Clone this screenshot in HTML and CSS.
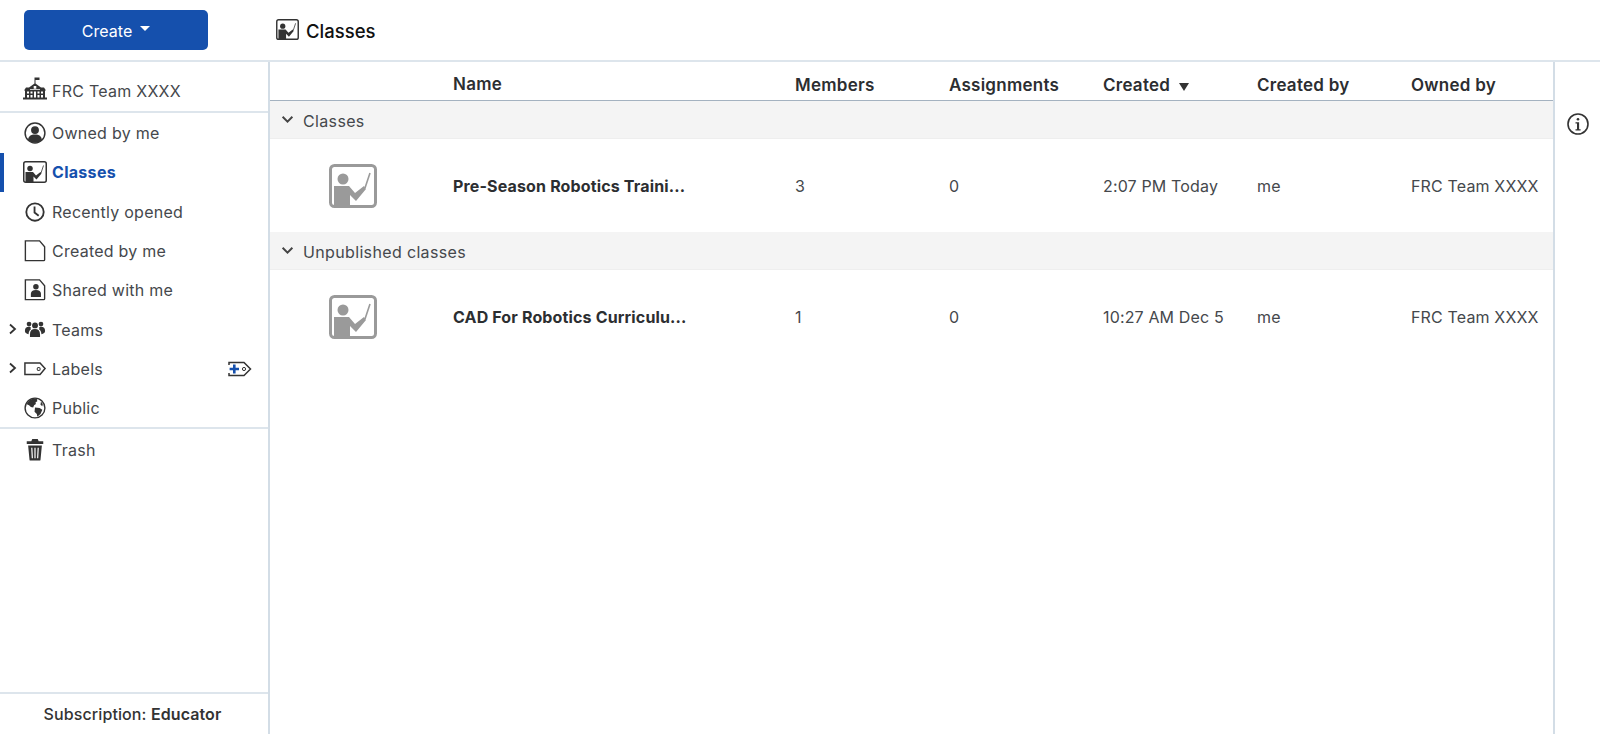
FILE: index.html
```html
<!DOCTYPE html>
<html lang="en">
<head>
<meta charset="utf-8">
<title>Classes</title>
<link rel="stylesheet" href="styles.css">
</head>
<body>
<svg width="0" height="0" class="defs">
  <defs>
    <symbol id="i-class" viewBox="0 0 48 44">
      <rect x="1.500" y="1.500" width="45" height="41" rx="4" fill="none" stroke="currentColor" stroke-width="3"/>
      <circle cx="14" cy="15" r="5.500" fill="currentColor"/>
      <path fill="currentColor" d="M5 22h15l6 7 9-7 2 3-10 12-6-6v11H5z"/>
      <path fill="none" stroke="currentColor" stroke-width="1.600" d="M36 24l5-15"/>
    </symbol>
  </defs>
</svg>
<header class="topbar">
  <div class="topbar-left">
    <button class="create">Create<span class="caret"></span></button>
  </div>
  <div class="crumb">
    <svg class="ico crumb-ico"><use href="#i-class"/></svg>
    <span>Classes</span>
  </div>
</header>
<div class="main">
  <nav class="sidebar">
    <div class="nav-top">
      <div class="nav-item team">
        <svg class="ico school" viewBox="0 0 24 24"><path fill="currentColor" d="M11.500 0h5v2.600h-4V6l5.500 4H21l2 3h-1v7h2v2H0v-2h2v-7H1l2-3h3l5.500-4z"/><path fill="#fff" d="M10.700 8.600h2.600v2.600h-2.600zM4 14h2v2H4zM4 17.500h2V20H4zM7.500 14h2v2h-2zM7.500 17.500h2V20h-2zM14.500 14h2v2h-2zM14.500 17.500h2V20h-2zM18 14h2v2h-2zM18 17.500h2V20h-2zM11 14h2v6h-2zM7 11.700h10v.8H7z"/></svg>
        <span>FRC Team XXXX</span>
      </div>
    </div>
    <div class="nav-list">
      <div class="nav-item">
        <svg class="ico" viewBox="0 0 24 24"><circle cx="12" cy="12" r="10.800" fill="none" stroke="currentColor" stroke-width="1.600"/><circle cx="12" cy="8.800" r="4.300" fill="currentColor"/><path fill="currentColor" d="M4.400 19.500c.3-4 3-6 7.600-6s7.300 2 7.600 6a11 11 0 0 1-15.200 0z"/></svg>
        <span>Owned by me</span>
      </div>
      <div class="nav-item active">
        <svg class="ico"><use href="#i-class"/></svg>
        <span>Classes</span>
      </div>
      <div class="nav-item">
        <svg class="ico" viewBox="0 0 24 24"><circle cx="12" cy="12" r="9.500" fill="none" stroke="currentColor" stroke-width="2"/><path fill="none" stroke="currentColor" stroke-width="2" d="M11.500 6V12.500l4.500 3.500"/></svg>
        <span>Recently opened</span>
      </div>
      <div class="nav-item">
        <svg class="ico" viewBox="0 0 24 24"><path fill="none" stroke="currentColor" stroke-width="1.500" d="M1.500 1h15.500l5.500 6.500v14a1 1 0 0 1-1 1h-20z"/></svg>
        <span>Created by me</span>
      </div>
      <div class="nav-item">
        <svg class="ico" viewBox="0 0 24 24"><path fill="none" stroke="currentColor" stroke-width="1.500" d="M1.500 1h15.500l5.500 6.500v14a1 1 0 0 1-1 1h-20z"/><circle cx="13" cy="8.500" r="3" fill="currentColor"/><path fill="currentColor" d="M7.500 19.500v-3.500c0-2.500 2-4 5.500-4s5.500 1.500 5.500 4v3.500z"/></svg>
        <span>Shared with me</span>
      </div>
      <div class="nav-item has-arrow">
        <svg class="arrow" viewBox="0 0 10 12"><path fill="none" stroke="currentColor" stroke-width="1.800" d="M2 1.500L7 6l-5 4.500"/></svg>
        <svg class="ico" viewBox="0 0 24 24"><circle cx="12" cy="7" r="3.200" fill="currentColor"/><circle cx="5.500" cy="5.500" r="2.600" fill="currentColor"/><circle cx="18.500" cy="5.500" r="2.600" fill="currentColor"/><path fill="currentColor" d="M6.500 17c0-4 2-6 5.500-6s5.500 2 5.500 6v2.500h-11zM1 13c0-3 1.500-4.500 4.500-4.500.8 0 1.500.2 2 .5-.5 1-.4 1.500.2 2.200-1.700 1-2.600 2.800-2.700 5.300C2.500 16 1 15 1 13zM23 13c0-3-1.500-4.500-4.500-4.500-.8 0-1.500.2-2 .5.500 1 .4 1.500-.2 2.200 1.700 1 2.600 2.800 2.700 5.300 2.500-.5 4-1.500 4-3.500z"/></svg>
        <span>Teams</span>
      </div>
      <div class="nav-item has-arrow">
        <svg class="arrow" viewBox="0 0 10 12"><path fill="none" stroke="currentColor" stroke-width="1.800" d="M2 1.500L7 6l-5 4.500"/></svg>
        <svg class="ico" viewBox="0 0 24 24"><path fill="none" stroke="currentColor" stroke-width="1.600" d="M1 5.500h16.500l5.500 6-5.500 6.500H1z"/><circle cx="16" cy="12" r="1.700" fill="none" stroke="currentColor" stroke-width="1.100"/></svg>
        <span>Labels</span>
        <svg class="add-label" viewBox="0 0 24 16"><path fill="none" stroke="#333" stroke-width="1.500" d="M1 4V1.500h15L22.500 8 16 14.500H1V12"/><circle cx="16" cy="8" r="1.600" fill="none" stroke="#333"/><path fill="#fff" d="M0 5h13v6H0z"/><path fill="#1550ad" d="M5 3.500h2.600v3.200h3.400v2.600H7.600v3.200H5V9.300H1.600V6.700H5z"/></svg>
      </div>
      <div class="nav-item">
        <svg class="ico" viewBox="0 0 24 24"><circle cx="12" cy="12" r="10.800" fill="none" stroke="currentColor" stroke-width="1.500"/><path fill="currentColor" d="M7 3c2-1.300 5-1.700 7-1l.5 2.500-2 1.500.5 1.500-2 1.500-1 2.500-2.500-.5L5.500 9 3 8C3.500 6 5 4.300 7 3zM12 11.500l5 .5 3 2-2 4.500-3.500 3-.5-3-2.500-2.500zM18.500 5l2 2.500-.5 2.500-2-1.500z"/></svg>
        <span>Public</span>
      </div>
    </div>
    <div class="nav-trash">
      <div class="nav-item">
        <svg class="ico" viewBox="0 0 24 24"><path fill="currentColor" d="M9 0h6l1 2.500h5v3H3v-3h5zM4.500 7h15l-1.500 15.500a1 1 0 0 1-1 1H7a1 1 0 0 1-1-1z"/><path stroke="#fff" stroke-width="1.300" d="M8.500 9.500l.6 11.500M12 9.500v11.500M15.500 9.500l-.6 11.500"/></svg>
        <span>Trash</span>
      </div>
    </div>
    <div class="subscription"><span>Subscription:&nbsp;<strong>Educator</strong></span></div>
  </nav>
  <section class="content">
    <div class="table-row head">
      <div></div>
      <div class="name-head">Name</div>
      <div>Members</div>
      <div>Assignments</div>
      <div class="sorted">Created<span class="sort"></span></div>
      <div>Created by</div>
      <div>Owned by</div>
    </div>
    <div class="group">
      <svg class="chev" viewBox="0 0 12 8"><path fill="none" stroke="currentColor" stroke-width="1.800" d="M1.500 1.500L6 6l4.500-4.500"/></svg>
      <span>Classes</span>
    </div>
    <div class="table-row item">
      <div class="thumb"><svg class="class-thumb"><use href="#i-class"/></svg></div>
      <div class="name">Pre-Season Robotics Traini...</div>
      <div>3</div>
      <div>0</div>
      <div>2:07 PM Today</div>
      <div>me</div>
      <div>FRC Team XXXX</div>
    </div>
    <div class="group">
      <svg class="chev" viewBox="0 0 12 8"><path fill="none" stroke="currentColor" stroke-width="1.800" d="M1.500 1.500L6 6l4.500-4.500"/></svg>
      <span>Unpublished classes</span>
    </div>
    <div class="table-row item">
      <div class="thumb"><svg class="class-thumb"><use href="#i-class"/></svg></div>
      <div class="name">CAD For Robotics Curriculu...</div>
      <div>1</div>
      <div>0</div>
      <div>10:27 AM Dec 5</div>
      <div>me</div>
      <div>FRC Team XXXX</div>
    </div>
  </section>
  <aside class="info">
    <svg class="info-ico" viewBox="0 0 24 24"><circle cx="12" cy="12" r="10" fill="none" stroke="currentColor" stroke-width="1.600"/><circle cx="12" cy="7.300" r="1.300" fill="currentColor"/><path fill="currentColor" d="M9.500 10.200h3.600v7h1.500v1.400H9.500v-1.400H11v-5.600H9.500z"/></svg>
  </aside>
</div>
</body>
</html>
```
FILE: styles.css
```css
* { box-sizing: border-box; }
html, body { margin: 0; height: 100%; overflow: hidden; }
body {
  font-family: "Inter", "Noto Sans", sans-serif;
  font-size: 16px;
  color: #45484c;
  background: #fff;
  display: flex;
  flex-direction: column;
}
.defs { position: absolute; }
.topbar {
  height: 62px;
  flex: none;
  display: flex;
  align-items: center;
  border-bottom: 2px solid #dde5ec;
}
.topbar-left { width: 276px; padding-left: 24px; }
.create {
  width: 184px;
  height: 40px;
  border: 0;
  border-radius: 5px;
  background: #1550ad;
  color: #fff;
  font: inherit;
  font-size: 16px;
  display: flex;
  align-items: center;
  justify-content: center;
  gap: 8px;
  padding-top: 2px;
  letter-spacing: .05px;
}
.caret {
  border-left: 5px solid transparent;
  border-right: 5px solid transparent;
  border-top: 5px solid #fff;
  margin-top: -4px;
}
.crumb {
  display: flex;
  align-items: center;
  gap: 7px;
  font-size: 18.500px;
  font-weight: 500;
  color: #111;
}
.crumb span { padding-top: 1px; }
.ico { width: 24px; height: 22px; flex: none; color: #333; }
.crumb-ico { width: 23px; height: 21px; margin-top: -2px; }
.main { flex: 1; display: flex; min-height: 0; }
.sidebar {
  width: 270px;
  flex: none;
  border-right: 2px solid #d3dde6;
  display: flex;
  flex-direction: column;
}
.nav-top { height: 51px; padding-top: 9px; border-bottom: 2px solid #dde5ec; }
.nav-list { padding-top: .4px; height: 316px; border-bottom: 2px solid #dde5ec; }
.nav-trash { padding-top: 1px; flex: 1; }
.nav-item {
  height: 39.300px;
  display: flex;
  align-items: center;
  gap: 5px;
  padding-left: 23px;
  position: relative;
  letter-spacing: .25px;
}
.school { width: 24px; height: 25px; margin-top: -3px; }
.nav-item.active { color: #1550ad; font-weight: 700; letter-spacing: .3px; }
.nav-item.active::before {
  content: "";
  position: absolute;
  left: 0;
  top: 0;
  width: 4px;
  height: 39px;
  background: #1550ad;
}
.arrow { position: absolute; left: 8px; top: 13px; width: 10px; height: 12px; color: #333; }
.add-label { width: 24px; height: 16px; margin-left: auto; margin-right: 16px; }
.subscription {
  height: 42px;
  border-top: 2px solid #dde5ec;
  display: flex;
  align-items: center;
  justify-content: center;
  font-weight: 500;
  color: #333;
  letter-spacing: .1px;
  padding-right: 3px;
}
.subscription strong { font-weight: 600; }
.content { flex: 1; min-width: 0; }
.table-row {
  display: grid;
  grid-template-columns: 183px 342px 154px 154px 154px 154px 1fr;
  align-items: center;
}
.head {
  height: 39px;
  border-bottom: 1px solid #a4b2c0;
  font-weight: 600;
  color: #2c2e31;
  font-size: 17px;
  letter-spacing: .25px;
  padding-top: 7px;
}
.name-head { margin-top: -2px; }
.sorted { display: flex; align-items: center; gap: 9px; }
.sort {
  border-left: 5px solid transparent;
  border-right: 5px solid transparent;
  border-top: 8px solid #333;
  margin-top: 5px;
}
.group {
  height: 38px;
  background: #f4f4f4;
  border-bottom: 1px solid #eeeeee;
  display: flex;
  align-items: center;
  gap: 9px;
  padding-left: 11px;
  letter-spacing: .35px;
}
.group span { padding-top: 2px; }
.chev { width: 13px; height: 9px; color: #444; }
.item { height: 93px; letter-spacing: .15px; padding-top: 1px; }
.thumb { display: flex; padding-left: 59px; }
.class-thumb { width: 48px; height: 44px; color: #9a9a9a; }
.name { font-weight: 700; color: #2c2e31; }
.info { width: 47px; flex: none; border-left: 2px solid #d3dde6; padding: 50px 0 0 11px; }
.info-ico { width: 24px; height: 24px; color: #333; display: block; }
```
